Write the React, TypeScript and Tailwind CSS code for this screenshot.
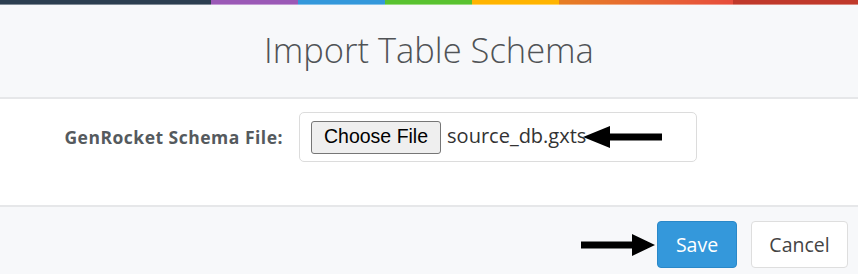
import React from "react";

/**
 * Import Table Schema - modal
 */

const segments = [
  { w: "w-[211px]", c: "bg-[#2c3e50]" },
  { w: "w-[87px]", c: "bg-[#9b59b6]" },
  { w: "w-[87px]", c: "bg-[#3498db]" },
  { w: "w-[87px]", c: "bg-[#59c22f]" },
  { w: "w-[87px]", c: "bg-[#ffb400]" },
  { w: "w-[174px]", c: "bg-gradient-to-r from-[#e67e22] to-[#e74c3c]" },
  { w: "flex-1", c: "bg-[#c0392b]" },
];

function ArrowLeft() {
  return (
    <svg width="79" height="24" viewBox="0 0 79 24" className="block">
      <polygon points="0,12 27,1 27,8.5 79,8.5 79,15.5 27,15.5 27,23" fill="#000" />
    </svg>
  );
}

function ArrowRight() {
  return (
    <svg width="74" height="22" viewBox="0 0 74 22" className="block">
      <polygon points="74,11 51,0 51,7.5 0,7.5 0,14.5 51,14.5 51,22" fill="#000" />
    </svg>
  );
}

export default function App() {
  return (
    <div className="w-[858px] h-[274px] bg-white font-['Open_Sans',sans-serif] overflow-hidden">
      {/* top colour strip */}
      <div className="flex h-[5px]">
        {segments.map((s, i) => (
          <div key={i} className={`${s.w} ${s.c} h-[5px] border-b border-white/40`} />
        ))}
      </div>

      {/* HEADER */}
      <div className="h-[94px] bg-[#f7f8fa] border-b-2 border-[#e6e7e9] flex items-center justify-center">
        <h1 className="text-[34.5px] font-light text-[#505356] leading-none pb-[2px]">
          Import Table Schema
        </h1>
      </div>

      {/* BODY */}
      <div className="h-[106px] pt-[13px]">
        <div className="flex items-center">
          <label className="w-[283px] text-right text-[17.5px] font-bold tracking-[0.5px] text-[#555a5e]">
            GenRocket Schema File:
          </label>
          <div className="ml-[16px] w-[398px] h-[50px] border border-[#dcdcdc] rounded-[5px] flex items-center pl-[11px]">
            <span className="h-[33px] px-[12px] flex items-center bg-[#efefef] border border-[#767676] rounded-[3px] font-['Liberation_Sans',sans-serif] text-[19.5px] text-black">
              Choose File
            </span>
            <span className="ml-[6px] text-[20px] text-[#333] leading-none pb-[3px]">source_db.gxts</span>
            <span className="ml-[-3px]">
              <ArrowLeft />
            </span>
          </div>
        </div>
      </div>

      {/* FOOTER */}
      <div className="h-[69px] bg-[#f7f8fa] border-t-2 border-[#e6e7e9] flex items-start justify-end pr-[10px] pt-[14px]">
        <span className="mr-[2px] mt-[13px]">
          <ArrowRight />
        </span>
        <button className="w-[80px] h-[47px] bg-[#3498db] border border-[#2a88c8] rounded-[4px] text-white text-[19.5px]">
          Save
        </button>
        <button className="ml-[14px] w-[97px] h-[47px] bg-white border border-[#dedede] rounded-[4px] text-[#444] text-[19.5px]">
          Cancel
        </button>
      </div>
    </div>
  );
}
